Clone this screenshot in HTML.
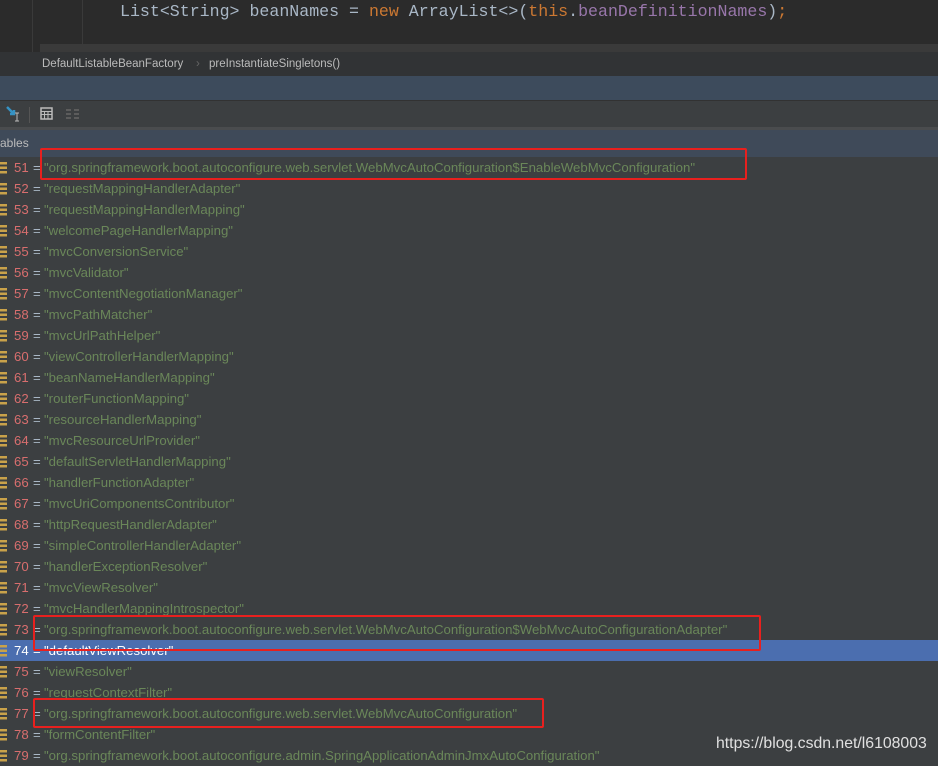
<!DOCTYPE html>
<html><head><meta charset="utf-8"><style>
*{margin:0;padding:0;box-sizing:border-box}
body{width:938px;height:763px;overflow:hidden;background:#3c3f41;position:relative;font-family:"Liberation Sans",sans-serif}
.abs{position:absolute}
.code{font-family:"Liberation Mono",monospace;font-size:16.6px;white-space:pre;color:#a9b7c6}
.row{position:absolute;left:0;width:938px;height:21px;font-size:13.2px;line-height:21px;white-space:pre}
.ic{position:absolute;left:0;top:5px;width:7px;height:12px;background:repeating-linear-gradient(#c9a24a 0 2.5px,transparent 2.5px 4.5px)}
.n{position:absolute;left:14px;color:#d86e6e}
.eq{position:absolute;left:33px;color:#a9b7c6}
.s{position:absolute;left:44px;color:#6a8759}
.box{position:absolute;border:2.5px solid #e8201e;border-radius:2px}
</style></head><body>
<div class="abs" style="left:0;top:0;width:938px;height:52px;background:#2b2b2b"></div>
<div class="abs" style="left:32px;top:0;width:1px;height:52px;background:#3a3a3a"></div>
<div class="abs" style="left:82px;top:0;width:1px;height:52px;background:#3a3a3a"></div>
<div class="abs" style="left:40px;top:44px;width:898px;height:8px;background:#3a3a3a"></div>
<div class="abs code" style="left:120px;top:2px">List&lt;String&gt; beanNames = <span style="color:#cc7832">new</span> ArrayList&lt;&gt;(<span style="color:#cc7832">this</span>.<span style="color:#9876aa">beanDefinitionNames</span>)<span style="color:#cc7832">;</span></div>
<div class="abs" style="left:0;top:52px;width:938px;height:24px;background:#313335"></div>
<div class="abs" style="left:42px;top:58px;font-size:11.5px;color:#bbbbbb">DefaultListableBeanFactory</div>
<div class="abs" style="left:196px;top:58px;font-size:11.5px;color:#666">›</div>
<div class="abs" style="left:209px;top:58px;font-size:11.5px;color:#bbbbbb">preInstantiateSingletons()</div>
<div class="abs" style="left:0;top:76px;width:938px;height:24px;background:#3d4b5c"></div>
<div class="abs" style="left:0;top:100px;width:938px;height:27px;background:#3c3f41;border-top:1px solid #323232"></div>
<svg class="abs" style="left:4px;top:104px" width="80" height="20">
<path d="M3 3 L10 10 M6 10 H10 V6" stroke="#3592c4" stroke-width="2.5" fill="none"/>
<path d="M13 9 V17 M11 9 H15 M11 17 H15" stroke="#bbb" stroke-width="1"/>
<rect x="25" y="3" width="1" height="16" fill="#555"/>
<rect x="37" y="4" width="11" height="11" fill="none" stroke="#bbb" stroke-width="1.5"/>
<path d="M37 7.5 H48 M37 10.5 H48 M40.5 7 V15 M44 7 V15" stroke="#bbb" stroke-width="1"/>
<path d="M62 6 H67 M62 10 H67 M62 14 H67 M70 6 H75 M70 10 H75 M70 14 H75" stroke="#666" stroke-width="1.5"/>
</svg>
<div class="abs" style="left:0;top:127px;width:938px;height:3px;background:#4a4c4e"></div>
<div class="abs" style="left:0;top:130px;width:938px;height:27px;background:#3f4a59"></div>
<div class="abs" style="left:0;top:136px;font-size:12px;color:#bbbbbb">ables</div>

<div class="row" style="top:157px"><div class="ic"></div><span class="n">51</span><span class="eq">=</span><span class="s">"org.springframework.boot.autoconfigure.web.servlet.WebMvcAutoConfiguration$EnableWebMvcConfiguration"</span></div>
<div class="row" style="top:178px"><div class="ic"></div><span class="n">52</span><span class="eq">=</span><span class="s">"requestMappingHandlerAdapter"</span></div>
<div class="row" style="top:199px"><div class="ic"></div><span class="n">53</span><span class="eq">=</span><span class="s">"requestMappingHandlerMapping"</span></div>
<div class="row" style="top:220px"><div class="ic"></div><span class="n">54</span><span class="eq">=</span><span class="s">"welcomePageHandlerMapping"</span></div>
<div class="row" style="top:241px"><div class="ic"></div><span class="n">55</span><span class="eq">=</span><span class="s">"mvcConversionService"</span></div>
<div class="row" style="top:262px"><div class="ic"></div><span class="n">56</span><span class="eq">=</span><span class="s">"mvcValidator"</span></div>
<div class="row" style="top:283px"><div class="ic"></div><span class="n">57</span><span class="eq">=</span><span class="s">"mvcContentNegotiationManager"</span></div>
<div class="row" style="top:304px"><div class="ic"></div><span class="n">58</span><span class="eq">=</span><span class="s">"mvcPathMatcher"</span></div>
<div class="row" style="top:325px"><div class="ic"></div><span class="n">59</span><span class="eq">=</span><span class="s">"mvcUrlPathHelper"</span></div>
<div class="row" style="top:346px"><div class="ic"></div><span class="n">60</span><span class="eq">=</span><span class="s">"viewControllerHandlerMapping"</span></div>
<div class="row" style="top:367px"><div class="ic"></div><span class="n">61</span><span class="eq">=</span><span class="s">"beanNameHandlerMapping"</span></div>
<div class="row" style="top:388px"><div class="ic"></div><span class="n">62</span><span class="eq">=</span><span class="s">"routerFunctionMapping"</span></div>
<div class="row" style="top:409px"><div class="ic"></div><span class="n">63</span><span class="eq">=</span><span class="s">"resourceHandlerMapping"</span></div>
<div class="row" style="top:430px"><div class="ic"></div><span class="n">64</span><span class="eq">=</span><span class="s">"mvcResourceUrlProvider"</span></div>
<div class="row" style="top:451px"><div class="ic"></div><span class="n">65</span><span class="eq">=</span><span class="s">"defaultServletHandlerMapping"</span></div>
<div class="row" style="top:472px"><div class="ic"></div><span class="n">66</span><span class="eq">=</span><span class="s">"handlerFunctionAdapter"</span></div>
<div class="row" style="top:493px"><div class="ic"></div><span class="n">67</span><span class="eq">=</span><span class="s">"mvcUriComponentsContributor"</span></div>
<div class="row" style="top:514px"><div class="ic"></div><span class="n">68</span><span class="eq">=</span><span class="s">"httpRequestHandlerAdapter"</span></div>
<div class="row" style="top:535px"><div class="ic"></div><span class="n">69</span><span class="eq">=</span><span class="s">"simpleControllerHandlerAdapter"</span></div>
<div class="row" style="top:556px"><div class="ic"></div><span class="n">70</span><span class="eq">=</span><span class="s">"handlerExceptionResolver"</span></div>
<div class="row" style="top:577px"><div class="ic"></div><span class="n">71</span><span class="eq">=</span><span class="s">"mvcViewResolver"</span></div>
<div class="row" style="top:598px"><div class="ic"></div><span class="n">72</span><span class="eq">=</span><span class="s">"mvcHandlerMappingIntrospector"</span></div>
<div class="row" style="top:619px"><div class="ic"></div><span class="n">73</span><span class="eq">=</span><span class="s">"org.springframework.boot.autoconfigure.web.servlet.WebMvcAutoConfiguration$WebMvcAutoConfigurationAdapter"</span></div>
<div class="row" style="top:640px;background:#4b6eaf"><div class="ic"></div><span class="n" style="color:#fff">74</span><span class="eq" style="color:#fff">=</span><span class="s" style="color:#fff">"defaultViewResolver"</span></div>
<div class="row" style="top:661px"><div class="ic"></div><span class="n">75</span><span class="eq">=</span><span class="s">"viewResolver"</span></div>
<div class="row" style="top:682px"><div class="ic"></div><span class="n">76</span><span class="eq">=</span><span class="s">"requestContextFilter"</span></div>
<div class="row" style="top:703px"><div class="ic"></div><span class="n">77</span><span class="eq">=</span><span class="s">"org.springframework.boot.autoconfigure.web.servlet.WebMvcAutoConfiguration"</span></div>
<div class="row" style="top:724px"><div class="ic"></div><span class="n">78</span><span class="eq">=</span><span class="s">"formContentFilter"</span></div>
<div class="row" style="top:745px"><div class="ic"></div><span class="n">79</span><span class="eq">=</span><span class="s">"org.springframework.boot.autoconfigure.admin.SpringApplicationAdminJmxAutoConfiguration"</span></div>

<div class="box" style="left:40px;top:148px;width:707px;height:32px"></div>
<div class="box" style="left:33px;top:615px;width:728px;height:36px"></div>
<div class="box" style="left:33px;top:698px;width:511px;height:30px"></div>
<div class="abs" style="left:716px;top:735px;font-size:15.8px;color:#e0e0e0">https://blog.csdn.net/l6108003</div>
</body></html>
